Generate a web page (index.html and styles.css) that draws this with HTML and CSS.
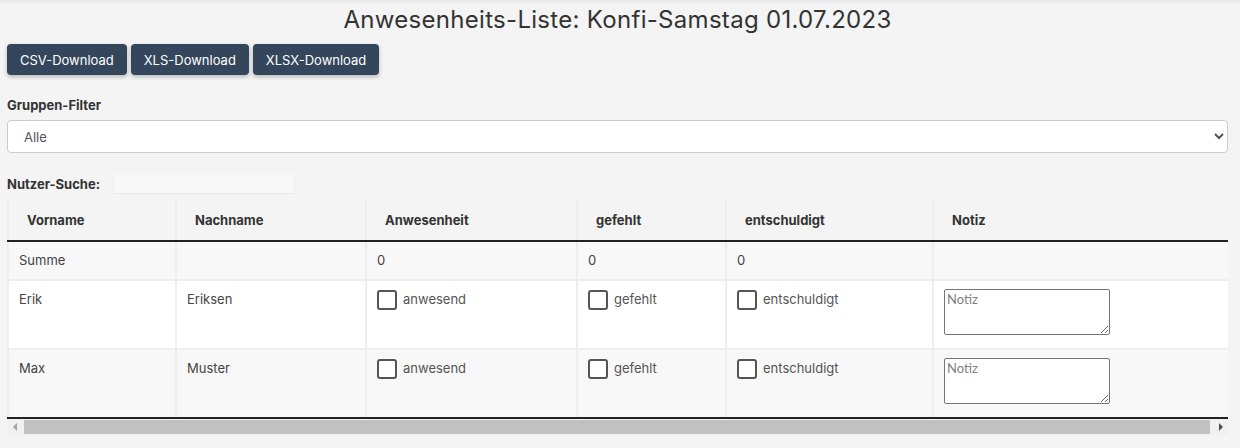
FILE: index.html
```html
<!DOCTYPE html>
<html lang="de">
<head>
  <meta charset="UTF-8" />
  <title>Anwesenheits-Liste</title>
  <link rel="stylesheet" href="styles.css">
</head>
<body>
  <div class="topbar"></div>
  <div class="page">
    <h1 class="title">Anwesenheits-Liste: Konfi-Samstag 01.07.2023</h1>

    <div class="downloads">
      <button class="btn">CSV-Download</button>
      <button class="btn">XLS-Download</button>
      <button class="btn">XLSX-Download</button>
    </div>

    <label class="field-label" for="gruppe">Gruppen-Filter</label>
    <select id="gruppe" class="select">
      <option>Alle</option>
    </select>

    <div class="search">
      <label for="suche">Nutzer-Suche:</label>
      <input type="text" id="suche" class="search-input" />
    </div>

    <div class="table-wrap">
      <table class="list">
        <thead>
          <tr>
            <th class="c-vor">Vorname</th>
            <th class="c-nach">Nachname</th>
            <th class="c-anw">Anwesenheit</th>
            <th class="c-gef">gefehlt</th>
            <th class="c-ent">entschuldigt</th>
            <th class="c-notiz">Notiz</th>
          </tr>
        </thead>
        <tbody>
          <tr class="sum">
            <td>Summe</td>
            <td></td>
            <td>0</td>
            <td>0</td>
            <td>0</td>
            <td></td>
          </tr>
          <tr>
            <td>Erik</td>
            <td>Eriksen</td>
            <td><label class="check"><input type="checkbox" /><span class="box"></span>anwesend</label></td>
            <td><label class="check"><input type="checkbox" /><span class="box"></span>gefehlt</label></td>
            <td><label class="check"><input type="checkbox" /><span class="box"></span>entschuldigt</label></td>
            <td><textarea class="note" placeholder="Notiz"></textarea></td>
          </tr>
          <tr>
            <td>Max</td>
            <td>Muster</td>
            <td><label class="check"><input type="checkbox" /><span class="box"></span>anwesend</label></td>
            <td><label class="check"><input type="checkbox" /><span class="box"></span>gefehlt</label></td>
            <td><label class="check"><input type="checkbox" /><span class="box"></span>entschuldigt</label></td>
            <td><textarea class="note" placeholder="Notiz"></textarea></td>
          </tr>
        </tbody>
      </table>
    </div>
    <!-- horizontal scrollbar of the table -->
    <div class="hscroll">
      <span class="arrow arrow-left"></span>
      <span class="thumb"></span>
      <span class="arrow arrow-right"></span>
    </div>
  </div>
</body>
</html>
```

FILE: styles.css
```css
* { box-sizing: border-box; }

body {
  margin: 0;
  background-color: #f4f4f4;
  font-family: Inter, "Open Sans", sans-serif;
  font-size: 13px;
  color: #444;
}

.topbar {
  height: 4px;
  background: linear-gradient(#e4e4e4, #f4f4f4);
}

.page {
  padding: 0 12px 0 7px;
}

.title {
  margin: 0;
  height: 40px;
  line-height: 32px;
  text-align: center;
  font-size: 24px;
  font-weight: 400;
  letter-spacing: 0.3px;
  color: #333;
}

.downloads {
  display: flex;
  gap: 4px;
}

.btn {
  height: 31px;
  padding: 0 13px;
  background-color: #34465b;
  color: #fff;
  border: none;
  border-radius: 4px;
  font-family: inherit;
  font-size: 13px;
  box-shadow: 0 2px 4px rgba(0, 0, 0, 0.25);
  cursor: pointer;
}

.field-label {
  display: block;
  margin-top: 22px;
  font-weight: 700;
  color: #333;
}

.select {
  display: block;
  width: 100%;
  height: 33px;
  margin-top: 7px;
  padding: 0 12px;
  background: #fff;
  border: 1px solid #ccc;
  border-radius: 4px;
  font-family: inherit;
  font-size: 13px;
  color: #555;
}

.search {
  display: flex;
  align-items: center;
  gap: 15px;
  margin-top: 21px;
  font-weight: 700;
  color: #333;
}

.search-input {
  width: 178px;
  height: 20px;
  background: #f8f8f8;
  border: none;
  border-bottom: 1px solid #e8e8e8;
}

.table-wrap {
  margin-top: 6px;
  overflow: hidden;
}

.list {
  width: 1228px;
  border-collapse: collapse;
}

.list th,
.list td {
  border-left: 2px solid #eeeeee;
  border-right: 2px solid #eeeeee;
  text-align: left;
  vertical-align: top;
}

.list th {
  height: 41px;
  padding: 12px 18px 0;
  background: #f4f4f4;
  border-bottom: 2px solid #222;
  font-weight: 700;
  color: #333;
}

.list td {
  padding: 8px 10px;
  border-bottom: 2px solid #eeeeee;
  line-height: 21px;
  color: #444;
}

.list tbody tr:nth-child(odd) td { background: #f8f8f8; }
.list tbody tr:nth-child(even) td { background: #fff; }
.list tbody tr:last-child td { border-bottom: 2px solid #222; }

.c-vor { width: 168px; }
.c-nach { width: 190px; }
.c-anw { width: 211px; }
.c-gef { width: 149px; }
.c-ent { width: 207px; }

.check {
  display: inline-flex;
  align-items: center;
  gap: 6px;
  color: #555;
}

.check input { display: none; }

.box {
  width: 20px;
  height: 20px;
  border: 2px solid #555;
  border-radius: 3px;
  background: #fff;
}

.note {
  display: block;
  width: 166px;
  height: 46px;
  margin-bottom: 5px;
  padding: 1px 2px;
  border: 1px solid #767676;
  border-radius: 2px;
  font-family: Lato, sans-serif;
  font-size: 13px;
}

.note::placeholder { color: #808080; }

.hscroll {
  display: flex;
  align-items: center;
  height: 16px;
  background: #f1f1f1;
}

.thumb {
  flex: 1;
  height: 14px;
  margin: 0 3px 0 2px;
  background: #c1c1c1;
}

.arrow {
  width: 15px;
  display: flex;
  justify-content: center;
}

.arrow-left::before,
.arrow-right::before {
  content: "";
  border-top: 4px solid transparent;
  border-bottom: 4px solid transparent;
}

.arrow-left::before { border-right: 4px solid #a3a3a3; }
.arrow-right::before { border-left: 4px solid #505050; }
```
